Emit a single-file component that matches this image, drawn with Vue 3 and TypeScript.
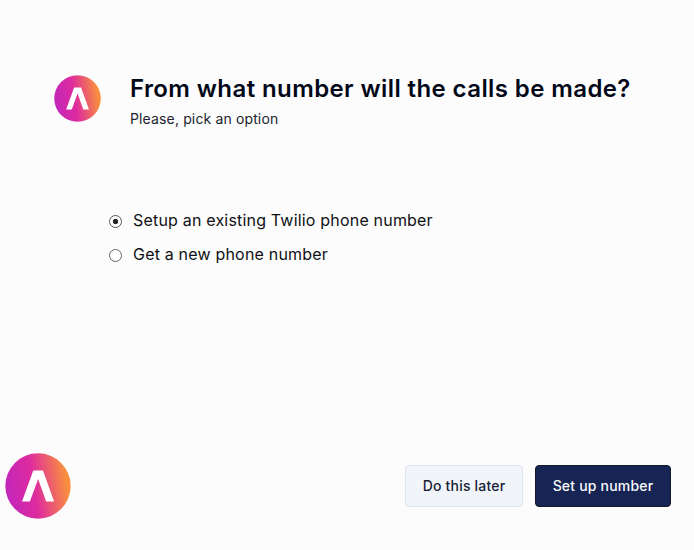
<script setup lang="ts">
import { ref } from 'vue'

interface Option {
  value: string
  label: string
}

const options: Option[] = [
  { value: 'existing', label: 'Setup an existing Twilio phone number' },
  { value: 'new', label: 'Get a new phone number' },
]
const selected = ref<string>('existing')
</script>

<template>
  <main class="page">
    <svg class="defs" width="0" height="0" aria-hidden="true">
      <defs>
        <linearGradient id="brand" x1="0" y1="0.58" x2="1" y2="0.42">
          <stop offset="0.05" stop-color="#c427b8" />
          <stop offset="0.43" stop-color="#de2a9f" />
          <stop offset="0.94" stop-color="#f98f3e" />
        </linearGradient>
        <symbol id="logo" viewBox="0 0 100 100">
          <circle cx="50" cy="50" r="49.5" fill="url(#brand)" />
          <path d="M42.8 26.5H57.6L74.4 73.3H62.4L50.2 39.5L37.8 73.3H25.8Z" fill="#fff" />
        </symbol>
      </defs>
    </svg>

    <header class="header">
      <svg class="logo"><use href="#logo" /></svg>
      <div>
        <h1 class="title">From what number will the calls be made?</h1>
        <p class="subtitle">Please, pick an option</p>
      </div>
    </header>

    <form class="options">
      <label v-for="option in options" :key="option.value" class="option">
        <input v-model="selected" class="radio" type="radio" name="source" :value="option.value" />
        <span>{{ option.label }}</span>
      </label>
    </form>

    <footer class="footer">
      <svg class="badge"><use href="#logo" /></svg>
      <div class="actions">
        <button class="button secondary" type="button">Do this later</button>
        <button class="button primary" type="button">Set up number</button>
      </div>
    </footer>
  </main>
</template>

<style>
body {
  background: #fcfcfc;
}
</style>

<style scoped>
.page {
  box-sizing: border-box;
  display: flex;
  flex-direction: column;
  height: 550px;
  padding: 73px 23px 31px 5px;
  background: #fcfcfc;
  color: #0f1115;
  font-family: Inter, "Liberation Sans", sans-serif;
}
.defs {
  position: absolute;
}
.header {
  display: flex;
  gap: 29px;
  padding-left: 49px;
}
.logo {
  flex: none;
  width: 47px;
  height: 47px;
  margin-top: 2px;
}
.title {
  margin: 0;
  color: #030819;
  font-size: 24px;
  font-weight: 600;
  letter-spacing: 0.4px;
  line-height: 32px;
  white-space: nowrap;
}
.subtitle {
  margin: 4px 0 0;
  color: #20242d;
  font-size: 14px;
  letter-spacing: 0.14px;
  line-height: 20px;
}
.options {
  display: flex;
  flex-direction: column;
  gap: 10px;
  margin-top: 79px;
  padding-left: 104px;
}
.option {
  display: flex;
  align-items: center;
  gap: 11px;
  font-size: 16px;
  letter-spacing: 0.19px;
  line-height: 24px;
}
.radio {
  appearance: none;
  box-sizing: border-box;
  width: 13px;
  height: 13px;
  margin: 2px 0 0;
  border: 1px solid #666;
  border-radius: 50%;
  background: #fff;
}
.radio:checked {
  border-color: #555;
  background: radial-gradient(circle, #222 0 2.2px, #fff 3.1px);
}
.footer {
  display: flex;
  align-items: center;
  justify-content: space-between;
  margin-top: auto;
}
.badge {
  width: 66px;
  height: 66px;
}
.actions {
  display: flex;
  gap: 12px;
}
.button {
  box-sizing: border-box;
  width: 118px;
  height: 42px;
  padding: 0;
  border: 1px solid #dfe5ec;
  border-radius: 4px;
  font: 500 14px/20px Inter, "Liberation Sans", sans-serif;
  letter-spacing: 0.2px;
}
.secondary {
  background: #f1f5f9;
  color: #182236;
}
.primary {
  width: 136px;
  border-color: #111827;
  background: #172554;
  color: #f8fafc;
}
</style>
